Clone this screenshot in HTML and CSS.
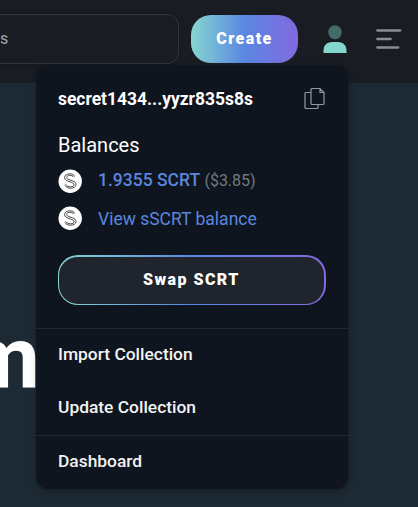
FILE: index.html
```
<!DOCTYPE html>
<html lang="en">
<head>
<meta charset="utf-8">
<title>Wallet menu</title>
<link rel="stylesheet" href="styles.css">
</head>
<body>
<svg class="defs" aria-hidden="true">
  <symbol id="coin" viewBox="0 0 24 24">
    <circle cx="12.200" cy="12.300" r="11.700" fill="#fff"/>
    <g fill="none" stroke="#333" stroke-width=".9">
      <path d="M16.800 7.500C15.800 5.600 14 4.800 11.800 4.800 8.800 4.800 6.600 6.300 6.600 8.600c0 2.100 1.600 2.900 3.500 3.600l3.600 1.300c1.500.6 2.300 1.200 2.300 2.300 0 1.400-1.600 2-3.300 2-2.300 0-4-.9-5.200-2.500"/>
      <path d="M6.800 16.300c1.200 1.900 3.200 2.900 5.700 2.900 3.200 0 5.500-1.300 5.500-3.600 0-2-1.300-2.900-3.400-3.700l-3.700-1.300C9.400 10 8.700 9.500 8.700 8.500c0-1.400 1.500-2.200 3.200-2.200 1.700 0 2.900.6 3.800 1.800"/>
    </g>
  </symbol>
</svg>
<header class="topbar">
  <div class="search">s</div>
  <button class="create">Create</button>
  <svg class="user" viewBox="0 0 24 29">
    <ellipse cx="12" cy="7.200" rx="6.700" ry="7" fill="#456a6c"/>
    <path d="M.5 28v-2.500C.5 20.500 4 17 9 17h6c5 0 8.500 3.500 8.500 8.500V28z" fill="#86d6d0"/>
  </svg>
  <svg class="burger" viewBox="0 0 26 22">
    <path d="M1.300 2.500h23M1.300 11h13.400M1.300 19.500h21" stroke="#8c8c8e" stroke-width="2.300" stroke-linecap="round"/>
  </svg>
</header>
<main class="hero">
  <div class="headline">m</div>
</main>
<section class="menu">
  <div class="wallet">
    <div class="account">
      <span>secret1434...yyzr835s8s</span>
      <svg class="copy" viewBox="0 0 22 23">
        <path d="M7 5.500H2a1 1 0 0 0-1 1v14a1 1 0 0 0 1 1h11a1 1 0 0 0 1-1v-3M8 1.500h8l4 4v11a1 1 0 0 1-1 1h-11a1 1 0 0 1-1-1v-14a1 1 0 0 1 1-1zM16 1.500v4h4" fill="none" stroke="#96989b" stroke-width="1.200"/>
      </svg>
    </div>
    <h2>Balances</h2>
    <div class="balance"><svg class="coin"><use href="#coin"/></svg><span><b>1.9355 SCRT</b> <i>($3.85)</i></span></div>
    <div class="balance"><svg class="coin"><use href="#coin"/></svg><span class="view">View sSCRT balance</span></div>
    <button class="swap">Swap SCRT</button>
  </div>
  <nav class="links">
    <a>Import Collection</a>
    <a>Update Collection</a>
  </nav>
  <nav class="links last">
    <a>Dashboard</a>
  </nav>
</section>
</body>
</html>
```
FILE: styles.css
```
* { box-sizing: border-box; }
body {
  margin: 0;
  height: 507px;
  overflow: hidden;
  position: relative;
  background: #1d2a34;
  color: #fff;
  font-family: Roboto, sans-serif;
}
button { font-family: inherit; color: #fff; padding: 0; }
.defs { position: absolute; width: 0; height: 0; }
.topbar {
  display: flex;
  align-items: flex-start;
  height: 83px;
  padding-top: 14px;
  background: #191d23;
}
.search {
  width: 179px;
  height: 50px;
  border: 1px solid #343636;
  border-left: 0;
  border-radius: 0 12px 12px 0;
  box-shadow: 0 0 5px rgba(0, 0, 0, .3);
  color: #a5a6a8;
  font-size: 16px;
  line-height: 48px;
}
.create {
  width: 107px;
  height: 48px;
  margin: 1px 0 0 12px;
  border: 0;
  border-radius: 20px;
  background: linear-gradient(90deg, #86d6d0, #5a87e2 50%, #8369df);
  font-size: 16px;
  font-weight: 900;
  letter-spacing: 1.450px;
  line-height: 46px;
}
.user { width: 24px; height: 29px; margin: 11px 0 0 24.500px; }
.burger { width: 26px; height: 22px; margin: 14px 0 0 29px; }
.hero { height: 424px; padding-top: 223px; }
.headline {
  width: 40px;
  display: flex;
  justify-content: flex-end;
  font-size: 88px;
  font-weight: 700;
  line-height: 104px;
}
.menu {
  position: absolute;
  left: 36px;
  top: 65px;
  width: 312px;
  height: 424px;
  border-radius: 12px;
  background: #0f151e;
  box-shadow: 1px 2px 6px rgba(0, 0, 0, .3);
}
.wallet { height: 263px; padding: 21px 22px 0; }
.account {
  display: flex;
  justify-content: space-between;
  height: 24px;
  font-size: 17.450px;
  font-weight: 700;
  line-height: 26px;
}
.copy { width: 22px; height: 23px; margin-top: 1px; }
h2 { margin: 22px 0 9px; font-size: 20px; font-weight: 400; line-height: 26px; }
.balance {
  display: flex;
  align-items: center;
  height: 28px;
  margin-bottom: 9px;
  color: #5b86df;
  font-size: 17.500px;
}
.balance b { font-weight: 500; }
.balance i { color: #77797c; font-size: 16px; font-style: normal; }
.balance span { line-height: 20px; padding-bottom: 1px; }
.balance .view { padding: 2px 0 0; }
.coin { width: 24px; height: 24px; margin-right: 16px; }
.swap {
  display: block;
  width: 268px;
  height: 50px;
  margin-top: 23px;
  border: solid transparent;
  border-width: 2px 2px 1px 1px;
  border-radius: 20px;
  background: linear-gradient(#1f242d, #1f242d) padding-box, linear-gradient(90deg, #86d6d0, #5a87e2 50%, #8369df) border-box;
  font-size: 16px;
  font-weight: 900;
  letter-spacing: 1.450px;
  line-height: 45px;
  padding-bottom: 2px;
}
.links { border-top: 1px solid #222831; }
.links a { display: block; height: 53px; padding-left: 22px; font-size: 17.400px; font-weight: 500; line-height: 51px; color: #f3f3f3; }
```
